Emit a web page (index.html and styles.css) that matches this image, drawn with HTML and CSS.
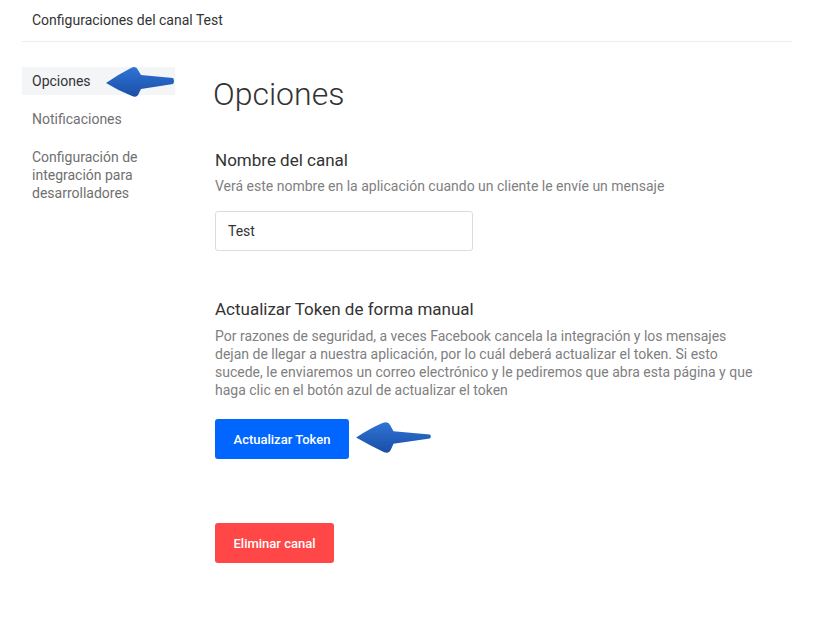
FILE: index.html
```html
<!DOCTYPE html>
<html lang="es">
<head>
<meta charset="utf-8">
<title>Configuraciones del canal Test</title>
<link rel="stylesheet" href="styles.css">
</head>
<body>
<div class="page">
  <header class="header">Configuraciones del canal Test</header>
  <div class="layout">
    <nav class="sidebar">
      <div class="nav-item active">Opciones
        <svg class="arrow arrow-nav" viewBox="0 0 70 32" width="70" height="32" aria-hidden="true">
          <defs>
            <linearGradient id="ag1" x1="0" y1="0" x2="0" y2="1">
              <stop offset="0" stop-color="#2f74d6"/>
              <stop offset="1" stop-color="#1b4ea6"/>
            </linearGradient>
          </defs>
          <path d="M1 17 Q14 8 26 2 Q31 -0.5 33 4 L36 9 L68 12 Q70 15 68 18 L36 23 L34 27 Q32 32.5 27 30 Q14 25 1 17 Z" fill="url(#ag1)"/>
        </svg>
      </div>
      <div class="nav-item">Notificaciones</div>
      <div class="nav-item">Configuración de integración para desarrolladores</div>
    </nav>
    <main class="main">
      <h1 class="title">Opciones</h1>
      <section class="section">
        <h2 class="section-title">Nombre del canal</h2>
        <p class="section-desc">Verá este nombre en la aplicación cuando un cliente le envíe un mensaje</p>
        <input class="input" type="text" value="Test">
      </section>
      <section class="section token">
        <h2 class="section-title">Actualizar Token de forma manual</h2>
        <p class="section-desc">Por razones de seguridad, a veces Facebook cancela la integración y los mensajes dejan de llegar a nuestra aplicación, por lo cuál deberá actualizar el token. Si esto sucede, le enviaremos un correo electrónico y le pediremos que abra esta página y que haga clic en el botón azul de actualizar el token</p>
        <div class="btn-row">
          <button class="btn btn-blue">Actualizar Token</button>
          <svg class="arrow arrow-btn" viewBox="0 0 70 32" width="77" height="33" preserveAspectRatio="none" aria-hidden="true">
            <defs>
              <linearGradient id="ag2" x1="0" y1="0" x2="0" y2="1">
                <stop offset="0" stop-color="#2f74d6"/>
                <stop offset="1" stop-color="#1b4ea6"/>
              </linearGradient>
            </defs>
            <path d="M1 16 Q14 7 25 2 Q30 -0.5 32 4 L35 10 L68 13 Q70 15 68 17 L35 22 L33 27 Q31 32.5 26 30 Q14 24 1 16 Z" fill="url(#ag2)"/>
          </svg>
        </div>
      </section>
      <button class="btn btn-red">Eliminar canal</button>
    </main>
  </div>
</div>
</body>
</html>
```
FILE: styles.css
```css
* { box-sizing: border-box; }
html, body { margin: 0; padding: 0; background: #fff; }
body {
  font-family: Roboto, "Liberation Sans", Arial, sans-serif;
  color: #333;
  font-size: 14px;
}
.page {
  width: 770px;
  margin-left: 22px;
}
.header {
  padding: 12px 10px;
  line-height: 17px;
  font-size: 14px;
  color: #333;
  border-bottom: 1px solid #ececec;
}
.layout {
  display: flex;
  gap: 40px;
}
.sidebar {
  width: 153px;
  flex: none;
  margin-top: 25px;
  display: flex;
  flex-direction: column;
  gap: 10px;
}
.nav-item {
  position: relative;
  padding: 5px 10px;
  line-height: 18px;
  font-size: 14px;
  color: #707070;
}
.nav-item.active {
  background: #f4f5f7;
  color: #333;
}
.arrow { position: absolute; display: block; }
.arrow-nav { left: 83px; top: -1px; }
.main {
  flex: 1;
  padding-top: 33px;
}
.title {
  margin: 0 0 0 -2px;
  font-size: 32px;
  font-weight: 300;
  line-height: 38px;
  color: #333;
}
.section { margin-top: 37px; }
.section.token { margin-top: 48px; }
.section-title {
  margin: 0;
  font-size: 17px;
  font-weight: 400;
  line-height: 20px;
  color: #333;
}
.section-desc {
  margin: 7px 0 0;
  font-size: 14px;
  line-height: 18px;
  color: #808080;
  max-width: 545px;
}
.token .section-desc { margin-top: 8px; }
.input {
  display: block;
  margin-top: 16px;
  width: 258px;
  height: 40px;
  padding: 0 12px;
  border: 1px solid #dcdcdc;
  border-radius: 3px;
  font-family: inherit;
  font-size: 14px;
  color: #333;
  outline: none;
}
.btn-row {
  position: relative;
  margin-top: 20px;
  height: 40px;
}
.arrow-btn { left: 140px; top: 2px; }
.btn {
  display: block;
  height: 40px;
  border: none;
  border-radius: 3px;
  font-family: inherit;
  font-size: 13px;
  font-weight: 500;
  color: #fff;
  padding: 0;
}
.btn-blue {
  width: 134px;
  background: #0066ff;
}
.btn-red {
  width: 119px;
  margin-top: 64px;
  background: #ff4747;
}
```
